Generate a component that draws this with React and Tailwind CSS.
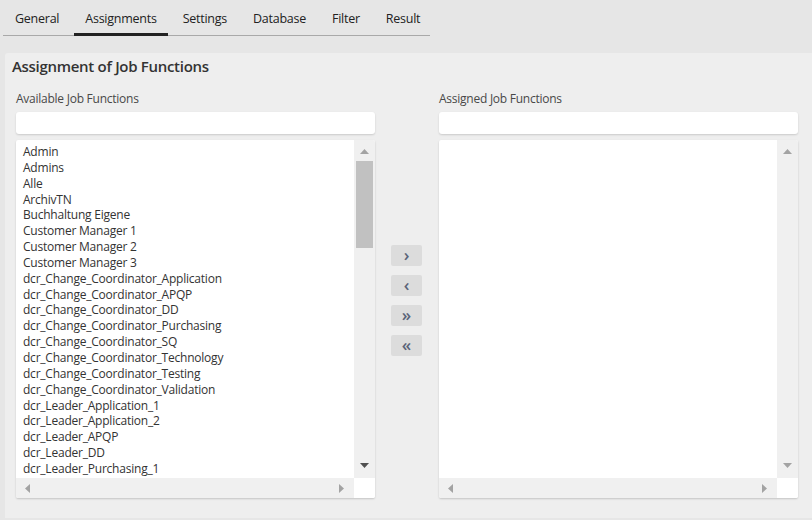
import React from "react";

const items = [
  "Admin",
  "Admins",
  "Alle",
  "ArchivTN",
  "Buchhaltung Eigene",
  "Customer Manager 1",
  "Customer Manager 2",
  "Customer Manager 3",
  "dcr_Change_Coordinator_Application",
  "dcr_Change_Coordinator_APQP",
  "dcr_Change_Coordinator_DD",
  "dcr_Change_Coordinator_Purchasing",
  "dcr_Change_Coordinator_SQ",
  "dcr_Change_Coordinator_Technology",
  "dcr_Change_Coordinator_Testing",
  "dcr_Change_Coordinator_Validation",
  "dcr_Leader_Application_1",
  "dcr_Leader_Application_2",
  "dcr_Leader_APQP",
  "dcr_Leader_DD",
  "dcr_Leader_Purchasing_1",
];

const tabs = ["General", "Assignments", "Settings", "Database", "Filter", "Result"];

function Tri({ dir, color }) {
  const pts = {
    up: "0,5 4.5,0 9,5",
    down: "0,0 9,0 4.5,5",
    left: "5,0 5,9 0,4.5",
    right: "0,0 0,9 5,4.5",
  }[dir];
  const w = dir === "up" || dir === "down" ? 9 : 5;
  const h = dir === "up" || dir === "down" ? 5 : 9;
  return (
    <svg width={w} height={h} viewBox={`0 0 ${w} ${h}`} className="block">
      <polygon points={pts} fill={color} />
    </svg>
  );
}

function ListBox({ entries, thumb }) {
  return (
    <div className="flex flex-col h-[358px] bg-white rounded-[2px] shadow-[0_1px_2px_rgba(0,0,0,0.18)] overflow-hidden">
      <div className="flex flex-1 min-h-0">
        <div className="flex-1 min-w-0 overflow-hidden pl-[7px] pt-[4px]">
          {entries.map((t) => (
            <div key={t} className="text-[12px] leading-[15.85px] tracking-[-0.22px] text-[#333] whitespace-nowrap">
              {t}
            </div>
          ))}
        </div>
        <div className="w-[21px] bg-[#f0f0f0] flex flex-col items-center">
          <div className="h-[21px] flex items-center justify-center pt-[2px]">
            <Tri dir="up" color="#a3a3a3" />
          </div>
          <div className="flex-1 w-full px-[2px]">
            {thumb && <div className="h-[87px] bg-[#c1c1c1]" />}
          </div>
          <div className="h-[22px] flex items-center justify-center pb-[3px]">
            <Tri dir="down" color={thumb ? "#505050" : "#a3a3a3"} />
          </div>
        </div>
      </div>
      <div className="flex h-[20px]">
        <div className="flex-1 bg-[#f0f0f0] flex items-center justify-between pl-[9px] pr-[10px]">
          <Tri dir="left" color="#a3a3a3" />
          <Tri dir="right" color="#a3a3a3" />
        </div>
        <div className="w-[21px] bg-white" />
      </div>
    </div>
  );
}

function Column({ label, entries, thumb }) {
  return (
    <div className="w-[359px] flex flex-col">
      <div className="text-[12px] leading-[16px] tracking-[-0.25px] text-[#484848] mb-[5px]">{label}</div>
      <div className="h-[22px] bg-white rounded-[3px] shadow-[0_1px_2px_rgba(0,0,0,0.15)] mb-[6px]" />
      <ListBox entries={entries} thumb={thumb} />
    </div>
  );
}

function Btn({ children }) {
  return (
    <div className="w-[31px] h-[21px] rounded-[2px] bg-[#dcdcdc] flex items-center justify-center text-[17px] font-semibold leading-none text-[#5a6478] pb-[3px]">
      {children}
    </div>
  );
}

export default function App() {
  return (
    <div
      className="w-[812px] h-[520px] bg-[#e6e6e6] overflow-hidden"
      style={{ fontFamily: '"Open Sans", "Noto Sans", sans-serif' }}
    >
      <div className="ml-[3px] w-[427px] h-[36px] border-b border-[#a9a9a9] flex pl-[1px] gap-[4px]">
        {tabs.map((t) => (
          <div key={t} className="relative px-[11px] pt-[10px] text-[12.5px] leading-[18px] tracking-[-0.25px] text-[#222]">
            {t}
            {t === "Assignments" && (
              <span className="absolute left-0 right-0 bottom-[-1px] h-[3px] bg-[#222]" />
            )}
          </div>
        ))}
      </div>
      <div className="mt-[17px] ml-[5px] h-[465px] bg-[#eeeeee] rounded-tl-[3px] pt-[3px]">
        <div className="pl-[7px] text-[15px] leading-[20px] tracking-[-0.3px] font-semibold text-[#333]">
          Assignment of Job Functions
        </div>
        <div className="flex pl-[11px] mt-[15px]">
          <Column label="Available Job Functions" entries={items} thumb />
          <div className="w-[64px] flex flex-col items-start pl-[16px] pt-[154px] gap-[9px]">
            <Btn>›</Btn>
            <Btn>‹</Btn>
            <Btn>»</Btn>
            <Btn>«</Btn>
          </div>
          <Column label="Assigned Job Functions" entries={[]} thumb={false} />
        </div>
      </div>
    </div>
  );
}
